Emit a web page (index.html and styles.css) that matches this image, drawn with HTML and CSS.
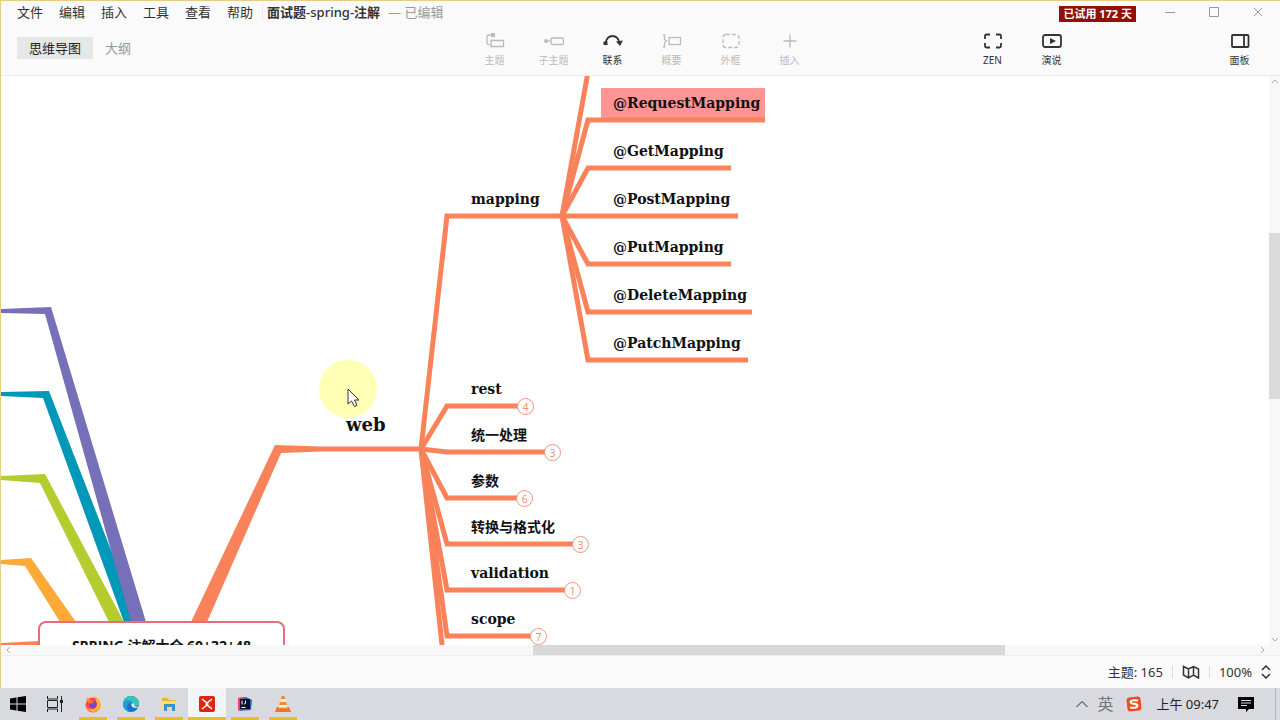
FILE: index.html
```html
<!DOCTYPE html>
<html lang="zh-CN">
<head>
<meta charset="utf-8">
<title>面试题-spring-注解</title>
<link rel="stylesheet" href="styles.css">
</head>
<body>
<div class="app">
  <header class="titlebar">
    <nav class="menu">
      <button>文件</button><button>编辑</button><button>插入</button><button>工具</button><button>查看</button><button>帮助</button>
    </nav>
    <h1 class="doc-title">面试题<span class="latin">-spring-</span>注解</h1>
    <span class="doc-state">— 已编辑</span>
    <button class="trial">已试用 172 天</button>
    <div class="window-controls">
      <button aria-label="最小化"><svg width="12" height="12"><path d="M1 6.500H11"/></svg></button>
      <button aria-label="最大化"><svg width="12" height="12"><path d="M1.500 1.500h9v9h-9z"/></svg></button>
      <button aria-label="关闭"><svg width="12" height="12"><path d="M2 2l8 8M10 2l-8 8"/></svg></button>
    </div>
  </header>

  <div class="toolbar">
    <div class="views">
      <button class="view view-active">思维导图</button>
      <button class="view">大纲</button>
    </div>
    <div class="tools">
      <button class="tool" disabled><svg viewBox="0 0 20 18"><path d="M4.500 12.500H3.500Q2 12.500 2 11V5Q2 3 4 3H8M6 8.500h12.500v6H6z"/><path class="solid" d="M6 1h4v4H6z"/></svg>主题</button>
      <button class="tool" disabled><svg viewBox="0 0 20 18"><rect x="7" y="6" width="12.500" height="6.500" rx="1.500"/><path d="M2 9h5"/><circle class="solid" cx="2" cy="9" r="2"/></svg>子主题</button>
      <button class="tool"><svg viewBox="0 0 20 18"><path class="thick" d="M2.500 11Q4 4 9.500 4Q15 4 16.500 11"/><path class="solid" d="M.5 9.500h4V13h-4zM13 9.500l7-1-3 5.500z"/></svg>联系</button>
      <button class="tool" disabled><svg viewBox="0 0 20 18"><path d="M1 3h1.500v4.500L4.500 9 2.500 10.500V15H1"/><rect x="7" y="5.500" width="11.500" height="7"/></svg>概要</button>
      <button class="tool" disabled><svg viewBox="0 0 20 18"><rect x="2" y="2.500" width="16" height="13" rx="3" stroke-dasharray="4 2"/></svg>外框</button>
      <button class="tool" disabled><svg viewBox="0 0 20 18"><path d="M10 2.500v13M3.500 9h13"/></svg>插入</button>
    </div>
    <div class="modes">
      <button class="tool"><svg viewBox="0 0 20 18"><path class="thick" d="M7 2.500H3.500Q2 2.500 2 4V7M13 2.500h3.500Q18 2.500 18 4V7M2 11v3q0 1.500 1.500 1.500H7M18 11v3q0 1.500-1.500 1.500H13"/></svg>ZEN</button>
      <button class="tool"><svg viewBox="0 0 20 18"><rect class="thick" x="1" y="3" width="18" height="12" rx="2"/><path class="solid" d="M8 6l6 3-6 3z"/></svg>演说</button>
      <button class="tool panel-tool"><svg viewBox="0 0 20 18"><rect class="thick" x="2" y="3" width="16.500" height="12" rx="1"/><path class="thick" d="M14 3v12"/></svg>面板</button>
    </div>
  </div>

  <div class="workspace">
    <main class="canvas">
      <div class="highlight"></div>
      <svg class="branches" viewBox="0 76 1268 569" width="1268" height="569">
        <path fill="#b5cc2e" d="M0 476L44 474 123 622H108L39 483 0 480z"/>
        <path fill="#0098b9" d="M0 392L48 391 138 622H123L42 398 0 396z"/>
        <path fill="#7670b8" d="M0 309L50 307 145 622H130L44 314 0 313z"/>
        <path fill="#ffaa38" d="M0 560L30 558 75 622H59L24 566 0 564z"/>
        <path fill="#f9825a" d="M0 643L38 641V645H0z"/>
        <path fill="#f9825a" d="M190 622L274 445 320 446.500H420V451.500H320L280 453 206 622z"/>
        <g class="twigs">
          <path d="M420 449L446 216H561"/>
          <path d="M420 449L446 406H517"/>
          <path d="M420 449L446 452H544"/>
          <path d="M420 449L446 498H516"/>
          <path d="M420 449L446 544H572"/>
          <path d="M420 449L446 590H564"/>
          <path d="M420 449L446 636H530"/>
          <path d="M420 449L445 682"/>
          <path d="M561 216L587 72"/>
          <path d="M561 216L587 120H764"/>
          <path d="M561 216L587 168H730"/>
          <path d="M561 216H737"/>
          <path d="M561 216L587 264H730"/>
          <path d="M561 216L587 312H751"/>
          <path d="M561 216L587 360H747"/>
        </g>
        <circle fill="#ffffb5" cx="347" cy="389" r="29"/>
      </svg>
      <div class="node root">SPRING 注解大全 60+32+48</div>
      <div class="node web">web</div>
      <div class="node mapping">mapping</div>
      <ul class="node leaves">
        <li>@RequestMapping</li><li>@GetMapping</li><li>@PostMapping</li><li>@PutMapping</li><li>@DeleteMapping</li><li>@PatchMapping</li>
      </ul>
      <ul class="node topics">
        <li>rest</li><li>统一处理</li><li>参数</li><li>转换与格式化</li><li>validation</li><li>scope</li>
      </ul>
      <button class="count count-rest">4</button>
      <button class="count count-handling">3</button>
      <button class="count count-params">6</button>
      <button class="count count-format">3</button>
      <button class="count count-validation">1</button>
      <button class="count count-scope">7</button>
      <svg class="pointer" width="14" height="20" viewBox="0 0 14 20"><path d="M1 1V16L4.500 13 7.500 18.500 10 17.300 7.500 12H12z" fill="#fff" stroke="#333"/></svg>
    </main>
    <div class="vscroll">
      <svg width="8" height="6"><path d="M1 5l3-3 3 3"/></svg>
      <div class="vtrack"><div class="vthumb"></div></div>
      <svg width="8" height="6"><path d="M1 1l3 3 3-3"/></svg>
    </div>
  </div>
  <div class="hscroll">
    <svg width="6" height="8"><path d="M5 1L2 4l3 3"/></svg>
    <div class="htrack"><div class="hthumb"></div></div>
    <svg width="6" height="8"><path d="M1 1l3 3-3 3"/></svg>
  </div>

  <footer class="statusbar">
    <span>主题: 165</span>
    <i class="divider"></i>
    <button aria-label="导航图"><svg width="18" height="14" viewBox="0 0 18 14"><path d="M1.500 1.500L6.500 4 11.500 1.500 16.500 4V13L11.500 10 6.500 13 1.500 10zM6.500 4v9M11.500 1.500V10"/></svg></button>
    <i class="divider"></i>
    <span>100%</span>
    <button class="stepper" aria-label="缩放"><svg width="10" height="14" viewBox="0 0 10 14"><path d="M1 5l4-4 4 4M1 9l4 4 4-4"/></svg></button>
  </footer>
</div>

<div class="taskbar">
  <button class="task start" aria-label="开始"><svg width="18" height="18" viewBox="0 0 18 18"><path d="M1 3.500L7.500 2.500V8.500H1zM8.500 2.300L17 1V8.500H8.500zM1 9.500H7.500V15.500L1 14.500zM8.500 9.500H17V17L8.500 15.700z"/></svg></button>
  <button class="task" aria-label="任务视图"><svg width="18" height="18" viewBox="0 0 18 18" fill="none" stroke="#222"><path d="M1.500 1v3h10V1M1.500 5.500h10v7h-10zM1.500 17v-3h10v3M15.500 1v16"/><path stroke-width="3" d="M15.500 5v3"/></svg></button>
  <button class="task running" aria-label="Firefox"><svg width="18" height="18" viewBox="0 0 18 18"><circle cx="9" cy="10" r="7.500" fill="#ff4b3e"/><path d="M10 1q7 3 6.500 10Q14 17 9 17 4 16 2 12 7 16 11 13 15 9 10 1z" fill="#ffb52b"/><path d="M2 5l2-3 1 3 4 1q-3 1-3 3z" fill="#ff922f"/><circle cx="9" cy="9.500" r="3.800" fill="#8042cc"/><path d="M5 7q3-2 5 0l-3 2z" fill="#ff7037"/></svg></button>
  <button class="task running" aria-label="Edge"><svg width="18" height="18" viewBox="0 0 18 18"><circle cx="9" cy="9" r="8" fill="#1673c7"/><path d="M1 9Q2 1 9 1q8 1 8 8 0 3-4 3-3 0-2-3Q9 5 5 6 2 7 1 9z" fill="#39c5b0"/><path d="M1 9q1-4 6-4 3 0 4 3Q6 7 5 12q0 4 4 5Q1 16 1 9z" fill="#219bdd"/><path d="M10 8q-3 5 6 5l1-1q-5 1-5-3z" fill="#e5f5f8"/></svg></button>
  <button class="task running" aria-label="文件资源管理器"><svg width="18" height="18" viewBox="0 0 18 18"><path d="M2 3h6l1 2h7v9H2z" fill="#efb52e"/><path d="M2 6h14v8H2z" fill="#ffdc72"/><path d="M4 9h11v7h-3v-4H7v4H4z" fill="#3792d4"/></svg></button>
  <button class="task running task-active" aria-label="XMind"><svg width="18" height="18" viewBox="0 0 18 18"><rect x="1" y="1" width="16" height="16" rx="2" fill="#df250f"/><path d="M4 4l5 4 5-4M4 14l5-4 5 4M7.500 9h3" fill="none" stroke="#fff" stroke-width="1.500"/></svg></button>
  <button class="task running" aria-label="IntelliJ IDEA"><svg width="18" height="18" viewBox="0 0 18 18"><path d="M2 3L10 2 16 5 15 15 3 16z" fill="#176bdb"/><path d="M2 3l6-1-4 14-2-1z" fill="#ed3c78"/><path d="M4 4h10v10H4z" fill="#100c20"/><path d="M6 5.500v4M9.500 5.500v2.500q0 1-1.500 1M5.500 12.500h4" fill="none" stroke="#fff"/></svg></button>
  <button class="task running" aria-label="VLC"><svg width="18" height="18" viewBox="0 0 18 18"><path d="M3 12h12l2 5H1z" fill="#ed7421"/><path d="M7.500 1h3L14 14H4z" fill="#f58b2c"/><path d="M6.700 4h4.600l.8 3H5.900zM5.200 10h7.600l.7 2.500h-9z" fill="#f4f0ed"/></svg></button>
  <div class="tray">
    <button aria-label="显示隐藏的图标"><svg width="14" height="10" viewBox="0 0 14 10"><path d="M1.500 8L7 2.500 12.500 8" fill="none" stroke="#222"/></svg></button>
    <span class="ime">英</span>
    <svg class="sogou" width="18" height="18" viewBox="0 0 18 18"><rect x="2" y="2" width="14" height="14" rx="3" fill="#f04b22" transform="rotate(-6 9 9)"/><path d="M13 5.500Q5.500 4.500 5.500 7q0 1.500 3.500 1.800 3.500.4 3.500 2Q12.500 13.500 5 12.500" fill="none" stroke="#fff" stroke-width="2"/></svg>
    <time>上午 09:47</time>
    <button class="notice" aria-label="通知"><svg width="18" height="18" viewBox="0 0 18 18"><path d="M1 2h16v12h-5l-3 3v-3H1z"/><path d="M4 5.500h10M4 8h10M4 10.500h6" stroke="#ddd"/></svg></button>
  </div>
</div>
</body>
</html>
```
FILE: styles.css
```css
* { box-sizing: border-box; }
body {
  margin: 0;
  height: 100vh;
  display: flex;
  flex-direction: column;
  overflow: hidden;
  font: 13px/20px "Noto Sans", "Noto Sans CJK SC", sans-serif;
  color: #333;
}
button {
  display: flex;
  align-items: center;
  justify-content: center;
  margin: 0;
  padding: 0;
  border: 0;
  background: none;
  font: inherit;
  color: inherit;
}
svg { display: block; flex: none; }
ul { margin: 0; padding: 0; list-style: none; }

.app {
  flex: 1;
  min-height: 0;
  display: flex;
  flex-direction: column;
  border-top: 1px solid #e6cd82;
  border-left: 1px solid #e6cd82;
  background: #fafafa;
}
.titlebar {
  flex: none;
  display: flex;
  align-items: center;
  height: 24px;
  padding: 0 12px 2px 16px;
}
.menu { display: flex; gap: 16px; }
.doc-title {
  margin: 0 8px 0 9px;
  padding-left: 4px;
  border-left: 1px solid #e8e8e8;
  font-size: 13px;
  line-height: 16px;
}
.latin { font-weight: 500; }
.doc-state { color: #999; }
.trial {
  margin: 4px 28px 0 auto;
  height: 16px;
  padding: 0 4px;
  background: #921005;
  color: #fff;
  font-size: 11px;
  font-weight: bold;
}
.window-controls { display: flex; gap: 32px; padding-right: 4px; }
.window-controls path { fill: none; stroke: #999; }

.toolbar {
  flex: none;
  display: grid;
  grid-template-columns: 1fr auto 1fr;
  height: 51px;
  padding-left: 3px;
  border-bottom: 1px solid #ececec;
}
.views { display: flex; align-items: flex-start; padding: 12px 0 0 13px; }
.view { height: 22px; padding: 0 12px; color: #999; }
.view-active { background: #e6e7e7; color: #222; }
.tools, .modes { display: flex; }
.modes { padding-right: 11px; }
.modes .tool:first-child { margin-left: auto; }
.modes .panel-tool { margin-left: 129px; }
.tool {
  flex-direction: column;
  justify-content: flex-start;
  width: 59px;
  padding-top: 7px;
  font-size: 10px;
  color: #333;
}
.tool:disabled { color: #bbb; }
.tool svg { width: 20px; height: 18px; fill: none; stroke: currentColor; stroke-width: 1.3; }
.tool .thick { stroke-width: 1.8; }
.tool .solid { fill: currentColor; stroke: none; }

.workspace { flex: 1; min-height: 0; display: flex; }
.canvas { position: relative; flex: 1; overflow: hidden; background: #fff; }
.branches { position: absolute; left: 0; top: 0; }
.twigs { fill: none; stroke: #f9825a; stroke-width: 5; }
.highlight { position: absolute; left: 600px; top: 12px; width: 164px; height: 34px; background: #ff9494; }
.node {
  position: absolute;
  font: bold 14px/20px "DejaVu Serif", "Noto Sans CJK SC", serif;
  color: #111;
  white-space: nowrap;
}
.root {
  left: 37px;
  top: 545px;
  width: 247px;
  height: 60px;
  padding-top: 13px;
  border: 2px solid #e96a78;
  border-radius: 8px;
  background: #fff;
  font-family: "Open Sans", "Noto Sans CJK SC", sans-serif;
  text-align: center;
}
.web { left: 345px; top: 339px; font-size: 18px; }
.mapping { left: 470px; top: 113px; }
.leaves { left: 612px; top: 17px; }
.leaves li { height: 48px; }
.topics { left: 470px; top: 303px; }
.topics li { height: 46px; }
.count {
  position: absolute;
  width: 17px;
  height: 17px;
  border: 1px solid #f9927a;
  border-radius: 50%;
  background: #fff;
  font-size: 10px;
  color: #f58a72;
}
.count-rest { left: 516px; top: 322px; }
.count-handling { left: 543px; top: 368px; }
.count-params { left: 515px; top: 414px; }
.count-format { left: 571px; top: 460px; }
.count-validation { left: 563px; top: 506px; }
.count-scope { left: 529px; top: 552px; }
.pointer { position: absolute; left: 346px; top: 312px; }

.vscroll, .hscroll { display: flex; align-items: center; background: #f8f8f8; }
.vscroll { flex-direction: column; width: 11px; padding: 2px 0; }
.hscroll { flex: none; height: 11px; padding: 0 14px 0 4px; border-bottom: 1px solid #eee; }
.vscroll path, .hscroll path { fill: none; stroke: #aaa; }
.vtrack { flex: 1; align-self: stretch; }
.vthumb { position: relative; top: 27%; height: 30%; background: #dadada; }
.htrack { flex: 1; align-self: stretch; }
.hthumb { width: 37.8%; height: 100%; margin-left: 41.8%; background: #d8d8d8; }

.statusbar {
  flex: none;
  display: flex;
  align-items: center;
  justify-content: flex-end;
  gap: 9px;
  height: 32px;
  padding-right: 9px;
}
.statusbar path { fill: none; stroke: #333; stroke-width: 1.5; }
.divider { width: 1px; height: 12px; background: #ddd; }

.taskbar {
  flex: none;
  display: flex;
  height: 32px;
  background: #d8dadf;
  color: #222;
}
.task { width: 38px; border-bottom: 3px solid transparent; padding-top: 3px; }
.start { width: 36px; }
.running {
  background: linear-gradient(#edb92e, #edb92e) center bottom / 28px 3px no-repeat border-box;
}
.task-active {
  background: linear-gradient(#edb92e, #edb92e) center bottom / 38px 3px no-repeat border-box, #f3f4f6;
}
.tray { display: flex; align-items: center; margin-left: auto; padding-right: 4px; }
.ime { margin: 0 12px 0 8px; font-size: 16px; color: #777; }
.sogou { margin-right: 13px; }
.notice { padding: 0 20px 0 18px; border-right: 1px solid #b5b8bf; align-self: stretch; }
```
